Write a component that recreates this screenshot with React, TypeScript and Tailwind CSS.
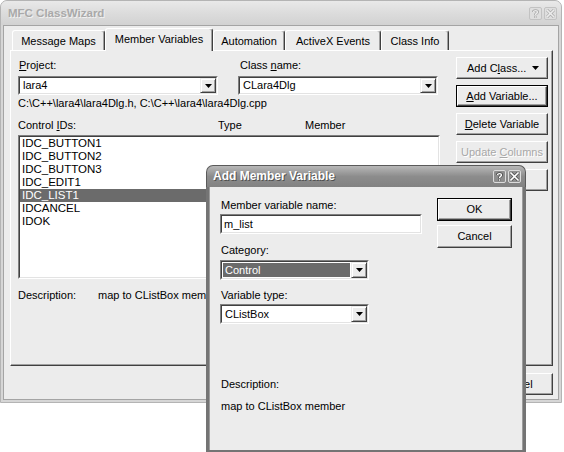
import React from "react";

function Arrow() {
  return (
    <svg width="7" height="4" viewBox="0 0 7 4" className="block">
      <path d="M0 0H7L3.5 4Z" fill="#000" />
    </svg>
  );
}

function Combo({ cls, value, hl = false }: { cls: string; value: string; hl?: boolean }) {
  return (
    <div className={`${cls} flex border border-t-[#7f7f7f] border-l-[#7f7f7f] border-r-white border-b-white`}>
      <div className="flex-1 flex border border-t-[#404040] border-l-[#404040] border-r-[#e3e3e3] border-b-[#e3e3e3] bg-white">
        <div className="flex-1 flex p-[1px]">
          <div className={`flex-1 flex items-center pl-[2px] ${hl ? "bg-[#6b6b6b] text-white" : ""}`}>{value}</div>
        </div>
        <div className="w-[16px] flex items-center justify-center bg-[#ececec] border border-t-[#ececec] border-l-[#ececec] border-r-[#404040] border-b-[#404040] shadow-[inset_1px_1px_0_#fff,inset_-1px_-1px_0_#a0a0a0]">
          <Arrow />
        </div>
      </div>
    </div>
  );
}

function Btn({
  cls,
  children,
  def = false,
  dis = false,
  inner = "justify-center",
}: {
  cls: string;
  children: React.ReactNode;
  def?: boolean;
  dis?: boolean;
  inner?: string;
}) {
  return (
    <div className={`${cls} flex bg-[#ececec] ${def ? "border border-black" : ""}`}>
      <div
        className={`flex-1 flex items-center ${inner} border border-t-white border-l-white border-r-[#404040] border-b-[#404040] shadow-[inset_-1px_-1px_0_#a0a0a0]`}
      >
        {dis ? <span className="text-[#a8a8a8] [text-shadow:1px_1px_0_#fff]">{children}</span> : children}
      </div>
    </div>
  );
}

function Tab({ cls, label, sel = false }: { cls: string; label: string; sel?: boolean }) {
  return (
    <div
      className={`${cls} flex items-center justify-center bg-[#ececec] rounded-t-[3px] border-t border-l border-t-white border-l-white border-r border-r-[#404040] shadow-[inset_-1px_0_0_#a0a0a0] ${
        sel ? "h-[23px] -mb-[1px] relative z-10 pb-[2px]" : "h-[20px] pt-[1px]"
      }`}
    >
      {label}
    </div>
  );
}

function TitleBtn({ glyph, active }: { glyph: "?" | "x"; active: boolean }) {
  const col = active ? "#ffffff" : "#ececec";
  const edge = active ? "#4a4a4a" : "#a8a8a8";
  return (
    <div
      className={`w-[13px] h-[13px] rounded-[2px] border flex items-center justify-center ${
        active ? "border-[#dcdcdc] bg-[#8e8e8e]" : "border-[#c2c2c2] bg-[#dedede]"
      }`}
    >
      {glyph === "?" ? (
        <svg width="9" height="9" viewBox="0 0 9 9">
          <path d="M2.5 3C2.5 1.2 6.5 1.2 6.5 3C6.5 4.4 4.5 4.4 4.5 6" fill="none" stroke={edge} strokeWidth="3" />
          <path d="M2.5 3C2.5 1.2 6.5 1.2 6.5 3C6.5 4.4 4.5 4.4 4.5 6" fill="none" stroke={col} strokeWidth="1.4" />
          <rect x="3.5" y="7" width="2" height="2" fill={col} stroke={edge} strokeWidth="0.6" />
        </svg>
      ) : (
        <svg width="9" height="9" viewBox="0 0 9 9">
          <path d="M1 1L8 8M8 1L1 8" stroke={edge} strokeWidth="3" strokeLinecap="square" />
          <path d="M1 1L8 8M8 1L1 8" stroke={col} strokeWidth="1.6" strokeLinecap="square" />
        </svg>
      )}
    </div>
  );
}

const items = ["IDC_BUTTON1", "IDC_BUTTON2", "IDC_BUTTON3", "IDC_EDIT1", "IDC_LIST1", "IDCANCEL", "IDOK"];

export default function App() {
  return (
    <div className="relative w-[564px] h-[452px] bg-white overflow-hidden text-[11px] leading-[13px] text-black font-[family-name:Liberation_Sans,Arial,sans-serif]">
      {/* Main window */}
      <div className="w-[562px] h-[403px] flex flex-col bg-[#d6d6d6] rounded-t-[7px] border border-[#b4b4b4] px-[2px] pb-[2px]">
        <div className="h-[24px] -mx-[2px] shrink-0 rounded-t-[6px] bg-gradient-to-b from-[#e9e9e9] via-[#dcdcdc] to-[#d2d2d2] flex items-center pl-[7px] pr-[4px]">
          <span className="font-bold text-[11.5px] text-[#a9a9a9] [text-shadow:1px_1px_0_#f0f0f0]">MFC ClassWizard</span>
          <div className="ml-auto flex gap-[2px]">
            <TitleBtn glyph="?" active={false} />
            <TitleBtn glyph="x" active={false} />
          </div>
        </div>
        <div className="flex-1 bg-[#ececec] border border-[#a4a4a4] flex flex-col">
          {/* tabs */}
          <div className="mt-[2px] ml-[8px] h-[22px] flex items-end">
            <Tab cls="w-[93px]" label="Message Maps" />
            <Tab cls="w-[108px]" label="Member Variables" sel />
            <Tab cls="w-[72px]" label="Automation" />
            <Tab cls="w-[96px]" label="ActiveX Events" />
            <Tab cls="w-[68px]" label="Class Info" />
          </div>
          {/* panel */}
          <div className="ml-[6px] w-[543px] h-[316px] border border-t-white border-l-white border-r-[#404040] border-b-[#404040] shadow-[inset_-1px_-1px_0_#a0a0a0] pt-[6px] pl-[7px] flex items-start">
            <div className="w-[422px] mt-[2px] flex flex-col">
              <div className="flex">
                <div className="w-[200px] flex flex-col">
                  <div className="pl-[1px]">
                    <span className="underline">P</span>roject:
                  </div>
                  <Combo cls="mt-[4px] w-[200px] h-[19px]" value="lara4" />
                </div>
                <div className="ml-[20px] w-[200px] flex flex-col">
                  <div className="pl-[2px]">
                    Class <span className="underline">n</span>ame:
                  </div>
                  <Combo cls="mt-[4px] w-[200px] h-[19px]" value="CLara4Dlg" />
                </div>
              </div>
              <div className="mt-[2px]">C:\C++\lara4\lara4Dlg.h, C:\C++\lara4\lara4Dlg.cpp</div>
              <div className="mt-[9px] flex">
                <div className="w-[200px]">
                  Control <span className="underline">I</span>Ds:
                </div>
                <div className="w-[87px]">Type</div>
                <div>Member</div>
              </div>
              <div className="mt-[3px] w-[422px] h-[144px] flex border border-t-[#7f7f7f] border-l-[#7f7f7f] border-r-white border-b-white">
                <div className="flex-1 bg-white border border-t-[#404040] border-l-[#404040] border-r-[#e3e3e3] border-b-[#e3e3e3] flex flex-col text-[11.5px]">
                  {items.map((it) => (
                    <div
                      key={it}
                      className={`h-[13px] leading-[13px] pl-[2px] ${it === "IDC_LIST1" ? "bg-[#6b6b6b] text-white" : ""}`}
                    >
                      {it}
                    </div>
                  ))}
                </div>
              </div>
              <div className="mt-[10px] flex">
                <div className="w-[80px]">Description:</div>
                <div>map to CListBox member</div>
              </div>
            </div>
            <div className="ml-[16px] flex flex-col gap-[6px]">
              <Btn cls="w-[92px] h-[22px]" inner="justify-between pl-[10px] pr-[8px]">
                <span>
                  Add C<span className="underline">l</span>ass...
                </span>
                <Arrow />
              </Btn>
              <Btn cls="w-[92px] h-[22px]" def>
                <span>
                  <span className="underline">A</span>dd Variable...
                </span>
              </Btn>
              <Btn cls="w-[92px] h-[22px]">
                <span>
                  <span className="underline">D</span>elete Variable
                </span>
              </Btn>
              <Btn cls="w-[92px] h-[22px]" dis>
                Update <span className="underline">C</span>olumns
              </Btn>
              <Btn cls="w-[92px] h-[22px]">
                <span>Bind All</span>
              </Btn>
            </div>
          </div>
          {/* bottom buttons */}
          <div className="mt-[7px] mr-[5px] flex justify-end gap-[6px]">
            <Btn cls="w-[75px] h-[22px]">
              <span>OK</span>
            </Btn>
            <Btn cls="w-[75px] h-[22px]">
              <span>Cancel</span>
            </Btn>
          </div>
        </div>
      </div>

      {/* Add Member Variable dialog */}
      <div className="absolute left-[206px] top-[165px] w-[320px] h-[288px] flex flex-col">
        <div className="h-[22px] shrink-0 rounded-t-[7px] bg-gradient-to-b from-[#b8b8b8] via-[#8c8c8c] to-[#828282] border border-b-0 border-[#5a5a5a] flex items-center pl-[6px] pr-[4px]">
          <span className="text-white font-bold text-[12px] [text-shadow:1px_1px_0_#505050]">Add Member Variable</span>
          <div className="ml-auto flex gap-[2px]">
            <TitleBtn glyph="?" active />
            <TitleBtn glyph="x" active />
          </div>
        </div>
        <div className="flex-1 bg-[#ececec] border-[3px] border-t-0 border-[#747474] shadow-[inset_1px_0_0_#9c9c9c,inset_-1px_0_0_#9c9c9c] flex items-start pt-[11px] pl-[11px]">
          <div className="w-[202px] mt-[1px] flex flex-col">
            <div className="pl-[1px]">Member variable name:</div>
            <div className="mt-[2px] w-[202px] h-[20px] flex border border-t-[#7f7f7f] border-l-[#7f7f7f] border-r-white border-b-white">
              <div className="flex-1 bg-white border border-t-[#404040] border-l-[#404040] border-r-[#e3e3e3] border-b-[#e3e3e3] flex items-center pl-[2px]">
                m_list
              </div>
            </div>
            <div className="mt-[10px] pl-[1px]">Category:</div>
            <Combo cls="mt-[3px] w-[149px] h-[20px]" value="Control" hl />
            <div className="mt-[9px] pl-[1px]">Variable type:</div>
            <Combo cls="mt-[2px] w-[149px] h-[20px]" value="CListBox" />
            <div className="mt-[54px] pl-[1px]">Description:</div>
            <div className="mt-[9px] pl-[1px]">map to CListBox member</div>
          </div>
          <div className="ml-[15px] flex flex-col gap-[4px]">
            <Btn cls="w-[75px] h-[23px]" def>
              <span>OK</span>
            </Btn>
            <Btn cls="w-[75px] h-[23px]">
              <span>Cancel</span>
            </Btn>
          </div>
        </div>
      </div>
    </div>
  );
}
